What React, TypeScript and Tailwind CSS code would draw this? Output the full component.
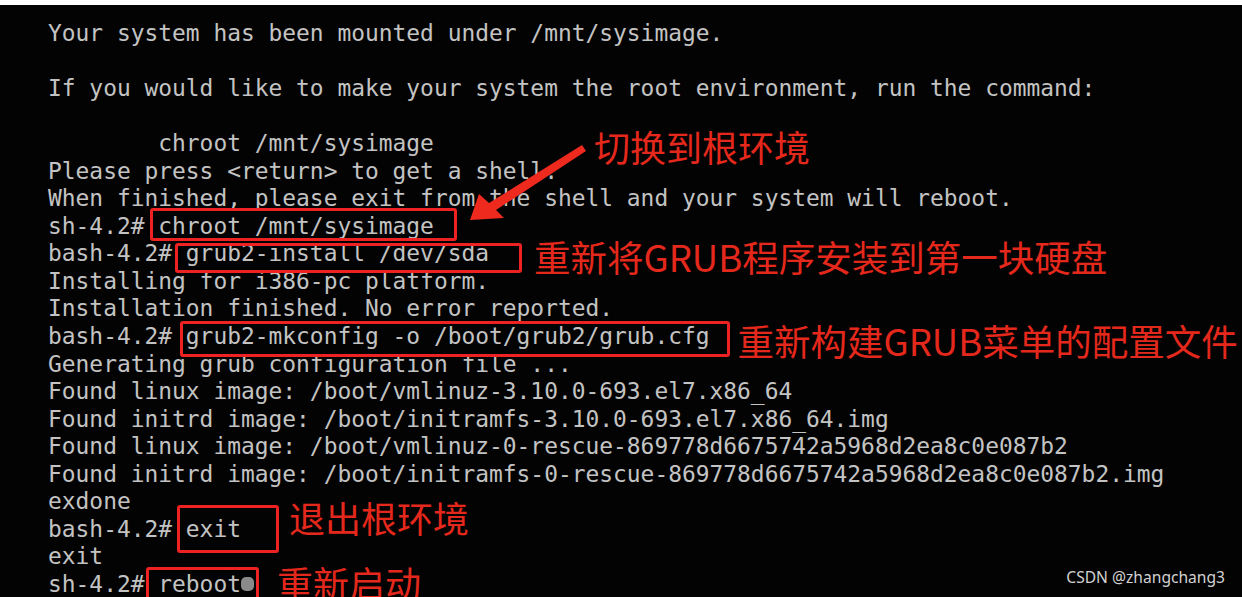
import React from "react";

type Line = {
  text: string;
  cmd?: string;
  box?: string; // classes for the red box around the command
  cursor?: boolean;
  label?: string;
  labelClass?: string;
};

const lines: Line[] = [
  { text: "Your system has been mounted under /mnt/sysimage." },
  { text: "" },
  { text: "If you would like to make your system the root environment, run the command:" },
  { text: "" },
  { text: "        chroot /mnt/sysimage", label: "切换到根环境", labelClass: "ml-[160px] mt-[-2px] text-[36px]" },
  { text: "Please press <return> to get a shell." },
  { text: "When finished, please exit from the shell and your system will reboot." },
  {
    text: "sh-4.2# ",
    cmd: "chroot /mnt/sysimage",
    box: "-left-[8px] -right-[23px] -top-[5px] -bottom-[1px]",
  },
  {
    text: "bash-4.2# ",
    cmd: "grub2-install /dev/sda",
    box: "-left-[11px] -right-[33px] top-[3px] -bottom-[5px]",
    label: "重新将GRUB程序安装到第一块硬盘",
    labelClass: "ml-[45px] mt-[-1px] text-[36.5px]",
  },
  { text: "Installing for i386-pc platform." },
  { text: "Installation finished. No error reported." },
  {
    text: "bash-4.2# ",
    cmd: "grub2-mkconfig -o /boot/grub2/grub.cfg",
    box: "-left-[6px] -right-[20px] -top-[2px] -bottom-[6px]",
    label: "重新构建GRUB菜单的配置文件",
    labelClass: "ml-[28px] mt-[0px] text-[36.5px]",
  },
  { text: "Generating grub configuration file ..." },
  { text: "Found linux image: /boot/vmlinuz-3.10.0-693.el7.x86_64" },
  { text: "Found initrd image: /boot/initramfs-3.10.0-693.el7.x86_64.img" },
  { text: "Found linux image: /boot/vmlinuz-0-rescue-869778d6675742a5968d2ea8c0e087b2" },
  { text: "Found initrd image: /boot/initramfs-0-rescue-869778d6675742a5968d2ea8c0e087b2.img" },
  { text: "exdone" },
  {
    text: "bash-4.2# ",
    cmd: "exit",
    box: "-left-[9px] -right-[38px] -top-[11px] -bottom-[10px]",
    label: "退出根环境",
    labelClass: "ml-[48px] mt-[-17px] text-[36px]",
  },
  { text: "exit" },
  {
    text: "sh-4.2# ",
    cmd: "reboot",
    box: "-left-[12px] -right-[18px] -top-[4px] -bottom-[31px]",
    cursor: true,
    label: "重新启动",
    labelClass: "ml-[23px] mt-[-7px] text-[36px]",
  },
];

const App = () => {
  return (
    <div className="w-[1242px] h-[597px] bg-white pt-[5px] overflow-hidden">
      <div className="relative w-full h-[592px] bg-[#030303] overflow-hidden">
        {/* Terminal output */}
        <div className="flex flex-col pt-[15px] pl-[48px] text-[#c3c3c3] font-['DejaVu_Sans_Mono',monospace] text-[22.9px] leading-[27.55px]">
          {lines.map((line, i) => (
            <div key={i} className="flex items-start h-[27.55px] whitespace-pre">
              <span>{line.text}</span>
              {line.cmd && (
                <span className="relative">
                  {line.cmd}
                  <span
                    className={`absolute border-[3px] border-[#ee2222] rounded-[3px] ${line.box}`}
                  />
                </span>
              )}
              {line.cursor && (
                <span className="mt-[6px] w-[13px] h-[14px] rounded-[5px] bg-[#8a8a8a]" />
              )}
              {line.label && (
                <span
                  className={`shrink-0 leading-none text-[#e5281c] font-['Noto_Sans_CJK_SC',sans-serif] ${line.labelClass}`}
                >
                  {line.label}
                </span>
              )}
            </div>
          ))}
        </div>

        {/* Arrow pointing at the chroot box */}
        <svg className="absolute left-0 top-0" width="1242" height="592" viewBox="0 5 1242 592">
          <polygon
            points="470,220 479,194 489,203 582,145 586,151 496,210 504,218"
            fill="#ee2a1e"
          />
        </svg>

        {/* Watermark */}
        <div className="absolute right-[17px] bottom-[11px] text-[#d2d2d2] font-['Noto_Sans',sans-serif] text-[15.6px] leading-none whitespace-nowrap">
          CSDN @zhangchang3
        </div>
      </div>
    </div>
  );
};

export default App;
